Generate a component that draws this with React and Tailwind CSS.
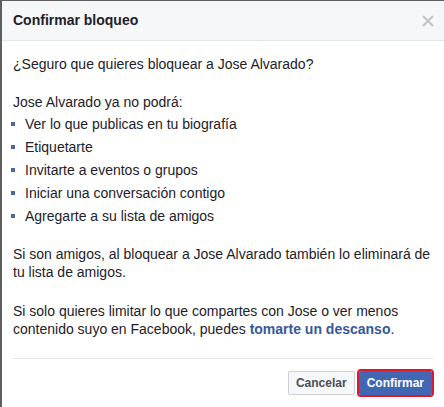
export default function App() {
  const items = [
    "Ver lo que publicas en tu biografía",
    "Etiquetarte",
    "Invitarte a eventos o grupos",
    "Iniciar una conversación contigo",
    "Agregarte a su lista de amigos",
  ];
  return (
    <div
      className="w-[444px] h-[407px] bg-white border-t border-l-2 border-[#5f5f5f] text-[#1d2129] overflow-hidden"
      style={{ fontFamily: '"Liberation Sans", Arial, Helvetica, sans-serif' }}
    >
      <div className="h-[40px] bg-[#f6f7f9] border-b border-[#e5e5e5] flex items-center justify-between pl-[11px] pr-[10px]">
        <div className="text-[14px] font-bold leading-[19px]">Confirmar bloqueo</div>
        <svg width="12" height="12" viewBox="0 0 12 12" className="mr-[-0px]">
          <path d="M1.5 1.5 L10.5 10.5 M10.5 1.5 L1.5 10.5" stroke="#bec2c9" strokeWidth="2" strokeLinecap="round" />
        </svg>
      </div>
      <div className="px-[11px] pt-[14px] pb-[20px] text-[14px] leading-[18px]">
        <p>¿Seguro que quieres bloquear a Jose Alvarado?</p>
        <p className="mt-[20px]">Jose Alvarado ya no podrá:</p>
        <ul className="mt-[4px]">
          {items.map((t, i) => (
            <li key={i} className={`flex items-center ml-[-2px] ${i > 0 ? "mt-[5px]" : ""}`}>
              <span className="w-[4px] h-[4px] bg-[#4b67a1] mr-[10px] shrink-0"></span>
              <span>{t}</span>
            </li>
          ))}
        </ul>
        <p className="mt-[20px]">
          Si son amigos, al bloquear a Jose Alvarado también lo eliminará de tu lista de amigos.
        </p>
        <p className="mt-[21px]">
          Si solo quieres limitar lo que compartes con Jose o ver menos contenido suyo en Facebook, puedes{" "}
          <span className="font-bold text-[#365899]">tomarte un descanso</span>.
        </p>
      </div>
      <div className="mx-[11px] border-t border-[#e5e5e5] pt-[12px] flex justify-end items-center gap-[4px]">
        <button className="h-[24px] px-[7px] bg-[#f6f7f9] border border-[#ced0d4] rounded-[2px] text-[12px] font-bold text-[#4b4f56] leading-[22px]">
          Cancelar
        </button>
        <button className="h-[24px] px-[7px] bg-[#4267b2] border border-[#4267b2] rounded-[2px] text-[12px] font-bold text-white leading-[22px] outline-2 outline-[#e0162b] outline-offset-0 mr-[1px]">
          Confirmar
        </button>
      </div>
    </div>
  );
}
